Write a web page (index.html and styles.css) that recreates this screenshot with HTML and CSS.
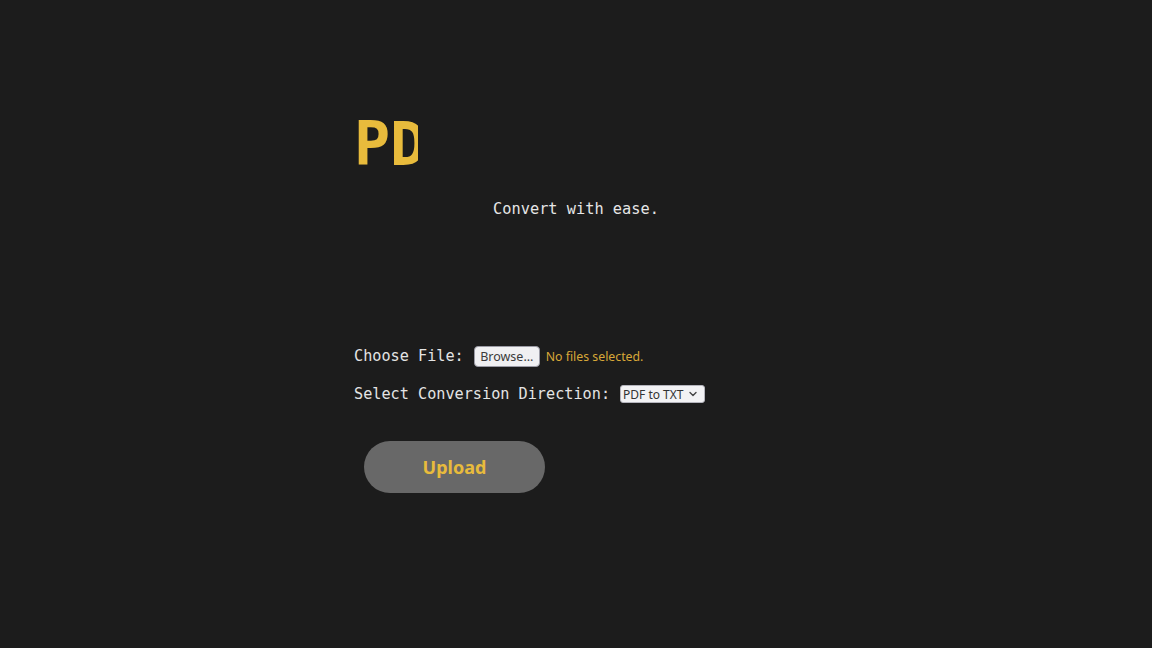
FILE: index.html
```html
<!DOCTYPE html>
<html lang="en">
<head>
<meta charset="utf-8">
<title>PDF Converter</title>
<link rel="stylesheet" href="styles.css">
</head>
<body>
<main class="page">
  <h1 class="logo"><span class="logo-text">PD</span></h1>
  <p class="tagline">Convert with ease.</p>
  <form class="form">
    <div class="row">
      <label class="label">Choose File:</label>
      <span class="file-btn">Browse…</span>
      <span class="file-status">No files selected.</span>
    </div>
    <div class="row row-second">
      <label class="label">Select Conversion Direction:</label>
      <span class="select">PDF to TXT
        <svg class="chev" width="8" height="6" viewBox="0 0 8 6"><path d="M1 1.5 L4 4.5 L7 1.5" fill="none" stroke="#444" stroke-width="1.4" stroke-linecap="round" stroke-linejoin="round"/></svg>
      </span>
    </div>
    <button type="button" class="upload">Upload</button>
  </form>
</main>
</body>
</html>
```

FILE: styles.css
```css
html, body {
  margin: 0;
  padding: 0;
}
body {
  background: #1c1c1c;
  min-height: 100vh;
  font-family: "DejaVu Sans Mono", monospace;
  color: #e4e4e4;
}
.page {
  width: 444px;
  margin: 0 auto;
  padding-top: 114px;
}
.logo {
  margin: 0;
  width: 64px;
  height: 60px;
  overflow: hidden;
  white-space: nowrap;
  font-family: "DejaVu Sans Mono", monospace;
  font-weight: bold;
  font-size: 60px;
  line-height: 60px;
  color: #e8bb3c;
}
.tagline {
  margin: 25px 0 0;
  text-align: center;
  font-size: 15.3px;
  line-height: 20px;
  color: #e6e6e6;
}
.form {
  margin-top: 126px;
  display: flex;
  flex-direction: column;
  align-items: flex-start;
}
.row {
  display: flex;
  align-items: center;
  height: 22px;
}
.row-second {
  margin-top: 16px;
}
.label {
  font-size: 15.2px;
  color: #e4e4e4;
  margin-right: 10px;
}
.file-btn {
  box-sizing: border-box;
  width: 66px;
  height: 21px;
  display: inline-flex;
  align-items: center;
  justify-content: center;
  background: #f0f0f2;
  border: 1px solid #9a9aa4;
  border-radius: 4px;
  font-family: "Noto Sans", sans-serif;
  font-size: 12.5px;
  color: #3a3a3a;
}
.file-status {
  margin-left: 6px;
  font-family: "Noto Sans", sans-serif;
  font-size: 12.3px;
  color: #d8a838;
}
.select {
  box-sizing: border-box;
  width: 85px;
  height: 18px;
  display: inline-flex;
  align-items: center;
  gap: 5px;
  padding: 0 4px 0 2px;
  background: #f2f2f4;
  border: 1px solid #b4b4bc;
  border-radius: 3px;
  font-family: "Noto Sans", sans-serif;
  font-size: 12px;
  color: #333;
}
.chev {
  flex: none;
}
.upload {
  margin: 36px 0 0 10px;
  width: 181px;
  height: 52px;
  border: none;
  border-radius: 26px;
  background: #686868;
  color: #e8bb3c;
  font-family: "Noto Sans", sans-serif;
  font-weight: bold;
  font-size: 18px;
  padding: 0;
}
```
